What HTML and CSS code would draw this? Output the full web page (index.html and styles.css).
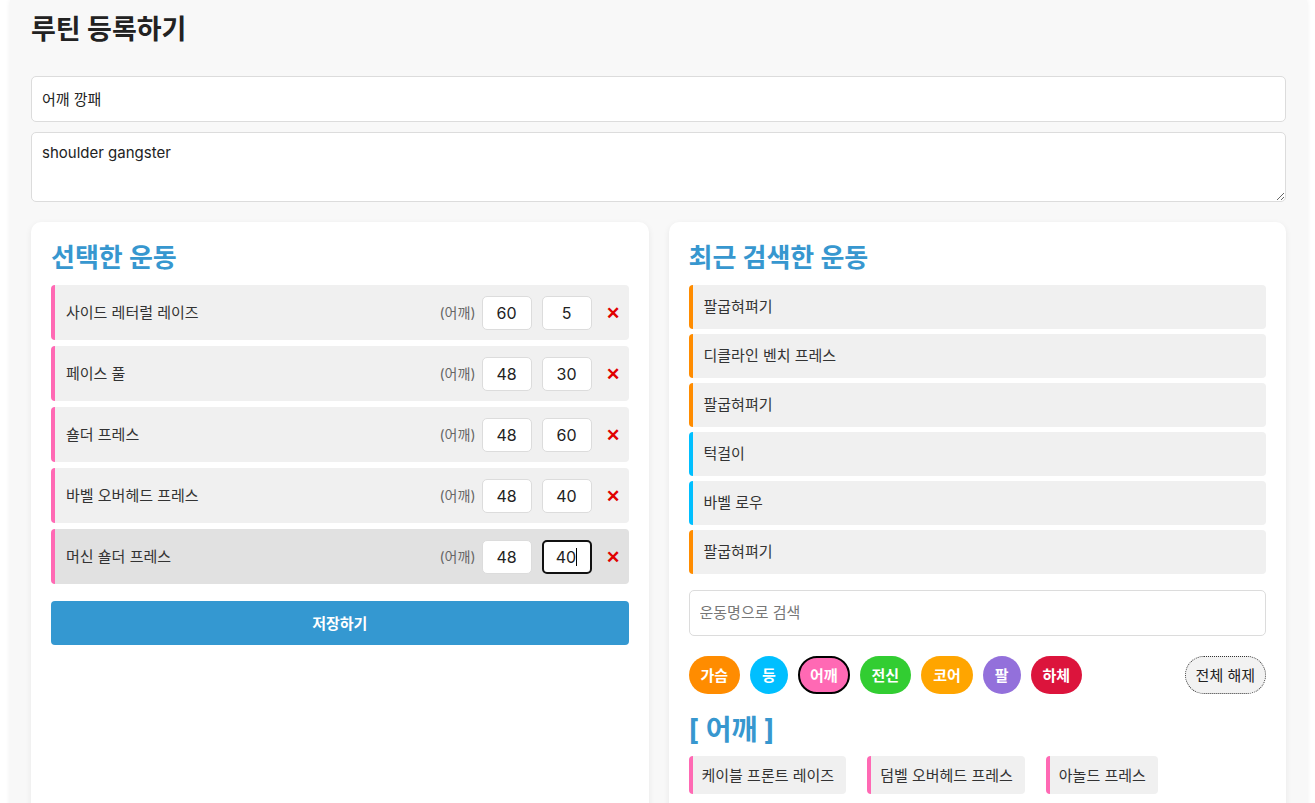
FILE: index.html
```html
<!DOCTYPE html>
<html lang="ko">
<head>
<meta charset="utf-8">
<title>루틴 등록하기</title>
<link rel="stylesheet" href="styles.css">
</head>
<body>
<div class="page">
  <h1 class="title">루틴 등록하기</h1>
  <input class="field" type="text" value="어깨 깡패">
  <textarea class="field area">shoulder gangster</textarea>

  <div class="cols">
    <section class="card">
      <h2 class="card-title">선택한 운동</h2>
      <div class="sel-list">
        <div class="sel-row"><span class="sel-name">사이드 레터럴 레이즈</span><span class="part">(어깨)</span><input class="num" value="60"><input class="num" value="5"><span class="del">✕</span></div>
        <div class="sel-row"><span class="sel-name">페이스 풀</span><span class="part">(어깨)</span><input class="num" value="48"><input class="num" value="30"><span class="del">✕</span></div>
        <div class="sel-row"><span class="sel-name">숄더 프레스</span><span class="part">(어깨)</span><input class="num" value="48"><input class="num" value="60"><span class="del">✕</span></div>
        <div class="sel-row"><span class="sel-name">바벨 오버헤드 프레스</span><span class="part">(어깨)</span><input class="num" value="48"><input class="num" value="40"><span class="del">✕</span></div>
        <div class="sel-row hover"><span class="sel-name">머신 숄더 프레스</span><span class="part">(어깨)</span><input class="num" value="48"><span class="num focus">40<span class="caret"></span></span><span class="del">✕</span></div>
      </div>
      <button class="save">저장하기</button>
    </section>

    <section class="card">
      <h2 class="card-title">최근 검색한 운동</h2>
      <div class="recent-list">
        <div class="recent chest">팔굽혀펴기</div>
        <div class="recent chest">디클라인 벤치 프레스</div>
        <div class="recent chest">팔굽혀펴기</div>
        <div class="recent back">턱걸이</div>
        <div class="recent back">바벨 로우</div>
        <div class="recent chest">팔굽혀펴기</div>
      </div>
      <input class="field search" type="text" placeholder="운동명으로 검색">
      <div class="chips">
        <span class="chip c-chest">가슴</span>
        <span class="chip c-back">등</span>
        <span class="chip c-shoulder active">어깨</span>
        <span class="chip c-full">전신</span>
        <span class="chip c-core">코어</span>
        <span class="chip c-arm">팔</span>
        <span class="chip c-leg">하체</span>
        <span class="chip clear">전체 해제</span>
      </div>
      <h2 class="group-title">[ 어깨 ]</h2>
      <div class="ex-list">
        <span class="ex">케이블 프론트 레이즈</span>
        <span class="ex">덤벨 오버헤드 프레스</span>
        <span class="ex">아놀드 프레스</span>
      </div>
    </section>
  </div>
</div>
</body>
</html>
```

FILE: styles.css
```css
* { box-sizing: border-box; }
html, body { margin: 0; padding: 0; background: #ffffff; }
body {
  font-family: Inter, "Noto Sans CJK KR", "Noto Sans", sans-serif;
  color: #222;
  overflow: hidden;
}
.page {
  margin: 0 8px 0 10px;
  background: #f8f8f8;
  padding: 12px 21px 40px;
  box-shadow: 0 0 5px rgba(0,0,0,0.07);
  min-height: 900px;
}
.title {
  margin: 0;
  font-size: 27px;
  line-height: 36px;
  font-weight: 700;
  color: #222;
}
.field {
  display: block;
  width: 100%;
  height: 46px;
  margin-top: 28px;
  border: 1px solid #dcdcdc;
  border-radius: 5px;
  background: #fff;
  padding: 0 10px 2px;
  font-family: Inter, "Noto Sans CJK KR", sans-serif;
  font-size: 15px;
  color: #222;
  outline: none;
}
.area {
  margin-top: 10px;
  height: 70px;
  padding: 10px 10px;
  resize: vertical;
  line-height: 20px;
}
.cols {
  display: grid;
  grid-template-columns: 1fr 1fr;
  gap: 20px;
  margin-top: 20px;
}
.card {
  background: #fff;
  border-radius: 10px;
  padding: 20px 20px 40px;
  box-shadow: 0 2px 6px rgba(0,0,0,0.07);
  min-height: 640px;
}
.card-title {
  margin: 0 0 11px;
  font-size: 26px;
  line-height: 32px;
  font-weight: 700;
  color: #3797cf;
}
.sel-list { display: flex; flex-direction: column; gap: 6px; }
.sel-row {
  display: flex;
  align-items: center;
  height: 55px;
  background: #f0f0f0;
  border-left: 4px solid #ff69b4;
  border-radius: 4px;
  padding: 0 5px 0 11px;
  font-size: 15px;
}
.sel-row.hover { background: #e1e1e1; }
.sel-name { flex: 1; color: #333; padding-bottom: 2px; }
.part { font-size: 14px; color: #666; margin-right: 6px; padding-bottom: 2px; }
.num {
  width: 50px;
  height: 34px;
  border: 1px solid #dcdcdc;
  border-radius: 5px;
  background: #fff;
  text-align: center;
  font-family: Inter, "Noto Sans CJK KR", sans-serif;
  font-size: 16px;
  color: #222;
  outline: none;
  padding: 0;
}
.num + .num { margin-left: 10px; }
.num.focus {
  display: inline-flex;
  align-items: center;
  justify-content: center;
  border: 2px solid #111;
  line-height: 30px;
}
.caret {
  display: inline-block;
  width: 1px;
  height: 18px;
  background: #000;
}
.del {
  width: 22px;
  margin-left: 10px;
  text-align: center;
  color: #e00000;
  font-size: 17px;
  font-weight: 700;
}
.save {
  display: block;
  width: 100%;
  height: 44px;
  margin-top: 17px;
  border: none;
  border-radius: 4px;
  background: #3498d1;
  color: #fff;
  font-family: Inter, "Noto Sans CJK KR", sans-serif;
  font-size: 15px;
  font-weight: 700;
  padding-bottom: 3px;
}
.recent-list { display: flex; flex-direction: column; gap: 5px; }
.recent {
  height: 44px;
  display: flex;
  align-items: center;
  background: #f0f0f0;
  border-radius: 4px;
  border-left: 4px solid #ff8c00;
  padding: 0 0 3px 11px;
  font-size: 15px;
  color: #333;
}
.recent.back { border-left-color: #00bfff; }
.search { margin-top: 16px; }
.search::placeholder { color: #777; }
.chips {
  display: flex;
  align-items: center;
  gap: 10px;
  margin-top: 20px;
}
.chip {
  height: 38px;
  padding: 0 10px 2px;
  display: inline-flex;
  align-items: center;
  justify-content: center;
  border-radius: 20px;
  border: 2px solid transparent;
  color: #fff;
  font-size: 15px;
  font-weight: 700;
}
.c-chest { background: #ff8c00; }
.c-back { background: #00bfff; }
.c-shoulder { background: #ff69b4; }
.c-full { background: #32cd32; }
.c-core { background: #ffa500; }
.c-arm { background: #9370db; }
.c-leg { background: #dc143c; }
.chip.active { border-color: #000; }
.chip.clear {
  margin-left: auto;
  background: #f2f2f2;
  border: 1px dotted #333;
  color: #222;
  font-weight: 400;
}
.group-title {
  margin: 19px 0 9px;
  font-size: 28px;
  line-height: 34px;
  font-weight: 700;
  color: #3797cf;
}
.ex-list { display: flex; gap: 21px; }
.ex {
  height: 38px;
  display: inline-flex;
  align-items: center;
  background: #f0f0f0;
  border-left: 4px solid #ff69b4;
  border-radius: 4px;
  padding: 0 12px 2px 9px;
  font-size: 15px;
  color: #333;
}
```
